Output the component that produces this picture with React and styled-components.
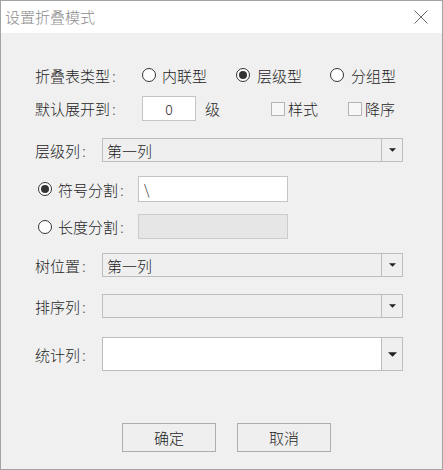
import React from "react";
import styled, { createGlobalStyle } from "styled-components";

const Global = createGlobalStyle`
  html, body { margin: 0; padding: 0; background: #ffffff; }
  body { font-family: "Noto Sans CJK SC", "Noto Sans", sans-serif; }
  * { box-sizing: border-box; }
`;

const Window = styled.div`
  width: 443px;
  height: 470px;
  border: 1px solid #a3a3a3;
  background: #f0f0f0;
  display: flex;
  flex-direction: column;
  color: #1e1e1e;
  font-size: 15px;
  font-weight: 300;
`;

const TitleBar = styled.div`
  height: 32px;
  background: #ffffff;
  display: flex;
  align-items: center;
  justify-content: space-between;
  padding: 0 14px 0 4px;
  flex-shrink: 0;
`;

const Title = styled.span`
  font-size: 15px;
  color: #8c8c8c;
  line-height: 1;
  margin-top: -2px;
`;

const CloseIcon = () => (
  <svg width="14" height="14" viewBox="0 0 14 14">
    <path d="M0.5 0.5 L13.5 13.5 M13.5 0.5 L0.5 13.5" stroke="#6b6b6b" strokeWidth="1" fill="none" />
  </svg>
);

const Body = styled.div`
  display: flex;
  flex-direction: column;
  padding-left: 34px;
`;

const Row = styled.div`
  display: flex;
  align-items: center;
  height: ${(p) => p.$h || 24}px;
  margin-top: ${(p) => p.$mt || 0}px;
`;

const Label = styled.span`
  width: ${(p) => p.$w}px;
  flex-shrink: 0;
  line-height: 1;
  white-space: nowrap;
`;

const Colon = styled.span`
  color: #555;
  margin-left: 2px;
`;

const RadioItem = styled.label`
  display: flex;
  align-items: center;
  width: ${(p) => p.$w || 94}px;
  margin-left: ${(p) => p.$ml || 0}px;
  flex-shrink: 0;
  line-height: 1;
  white-space: nowrap;
`;

const RadioCircle = styled.span`
  width: 14px;
  height: 14px;
  border-radius: 50%;
  border: 1px solid #333;
  background: #fff;
  display: flex;
  align-items: center;
  justify-content: center;
  margin-right: ${(p) => p.$gap || 6}px;
  flex-shrink: 0;
  &::after {
    content: "";
    width: 8px;
    height: 8px;
    border-radius: 50%;
    background: ${(p) => (p.$on ? "#333" : "transparent")};
  }
`;

const CheckBox = styled.span`
  width: 14px;
  height: 14px;
  border: 1px solid #b4b4b4;
  background: #f7f7f7;
  margin-right: 3px;
  flex-shrink: 0;
`;

const CheckItem = styled.label`
  display: flex;
  align-items: center;
  line-height: 1;
  margin-left: ${(p) => p.$ml || 0}px;
`;

const TextBox = styled.div`
  width: ${(p) => p.$w}px;
  height: ${(p) => p.$h || 25}px;
  border: 1px solid ${(p) => (p.$disabled ? "#cccccc" : "#c4c4c4")};
  background: ${(p) => (p.$disabled ? "#e6e6e6" : "#ffffff")};
  display: flex;
  align-items: center;
  justify-content: ${(p) => (p.$center ? "center" : "flex-start")};
  padding-left: ${(p) => (p.$center ? 0 : 5)}px;
  font-size: 14px;
  line-height: 1;
  flex-shrink: 0;
`;

const Unit = styled.span`
  margin-left: 9px;
  line-height: 1;
`;

const Combo = styled.div`
  width: 301px;
  height: ${(p) => p.$h || 24}px;
  border: 1px solid #bdbdbd;
  background: ${(p) => (p.$white ? "#ffffff" : "#efefef")};
  display: flex;
  flex-shrink: 0;
`;

const ComboText = styled.div`
  flex: 1;
  display: flex;
  align-items: center;
  padding-left: 4px;
  font-size: 15px;
  line-height: 1;
`;

const ComboButton = styled.div`
  width: 21px;
  border-left: 1px solid #bdbdbd;
  background: #efefef;
  display: flex;
  align-items: center;
  justify-content: center;
`;

const Arrow = ({ big }) => (
  <svg width={big ? 9 : 7} height={big ? 5 : 4} viewBox="0 0 8 4">
    <path d="M0 0 L8 0 L4 4 Z" fill="#222" />
  </svg>
);

const Buttons = styled.div`
  display: flex;
  margin-top: 52px;
  padding-left: 121px;
  gap: 21px;
`;

const Button = styled.button`
  width: 94px;
  height: 29px;
  border: 1px solid #adadad;
  background: #efefef;
  font-family: inherit;
  font-weight: 300;
  font-size: 15px;
  color: #1e1e1e;
  padding: 0;
  line-height: 1;
`;

const Combobox = ({ value, h, white, bigArrow }) => (
  <Combo $h={h} $white={white}>
    <ComboText>{value}</ComboText>
    <ComboButton>
      <Arrow big={bigArrow} />
    </ComboButton>
  </Combo>
);

export default function App() {
  return (
    <>
      <Global />
      <Window>
        <TitleBar>
          <Title>设置折叠模式</Title>
          <CloseIcon />
        </TitleBar>
        <Body>
          <Row $mt={30}>
            <Label $w={107}>
              折叠表类型<Colon>:</Colon>
            </Label>
            <RadioItem>
              <RadioCircle />
              内联型
            </RadioItem>
            <RadioItem>
              <RadioCircle $on $gap={7} />
              层级型
            </RadioItem>
            <RadioItem>
              <RadioCircle $gap={7} />
              分组型
            </RadioItem>
          </Row>
          <Row $mt={9} $h={25}>
            <Label $w={107}>
              默认展开到<Colon>:</Colon>
            </Label>
            <TextBox $w={54} $center>0</TextBox>
            <Unit>级</Unit>
            <CheckItem $ml={51}>
              <CheckBox />
              样式
            </CheckItem>
            <CheckItem $ml={30}>
              <CheckBox />
              降序
            </CheckItem>
          </Row>
          <Row $mt={17} $h={24}>
            <Label $w={67}>
              层级列<Colon>:</Colon>
            </Label>
            <Combobox value="第一列" />
          </Row>
          <Row $mt={14} $h={26}>
            <RadioItem $w={100} $ml={3}>
              <RadioCircle $on />
              符号分割<Colon>:</Colon>
            </RadioItem>
            <TextBox $w={150} $h={26}>\</TextBox>
          </Row>
          <Row $mt={12} $h={25}>
            <RadioItem $w={100} $ml={3}>
              <RadioCircle />
              长度分割<Colon>:</Colon>
            </RadioItem>
            <TextBox $w={150} $h={25} $disabled />
          </Row>
          <Row $mt={14} $h={24}>
            <Label $w={67}>
              树位置<Colon>:</Colon>
            </Label>
            <Combobox value="第一列" />
          </Row>
          <Row $mt={17} $h={24}>
            <Label $w={67}>
              排序列<Colon>:</Colon>
            </Label>
            <Combobox value="" />
          </Row>
          <Row $mt={19} $h={34}>
            <Label $w={67}>
              统计列<Colon>:</Colon>
            </Label>
            <Combobox value="" h={34} white bigArrow />
          </Row>
        </Body>
        <Buttons>
          <Button>确定</Button>
          <Button>取消</Button>
        </Buttons>
      </Window>
    </>
  );
}
